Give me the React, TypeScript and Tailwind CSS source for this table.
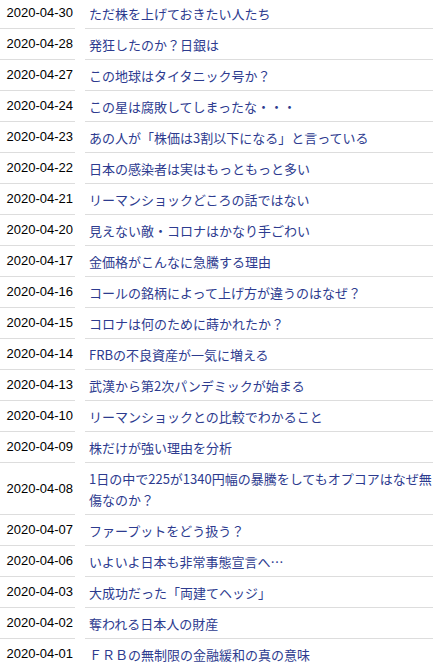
import { Fragment } from "react";

const posts: { date: string; title: string }[] = [
  { date: "2020-04-30", title: "ただ株を上げておきたい人たち" },
  { date: "2020-04-28", title: "発狂したのか？日銀は" },
  { date: "2020-04-27", title: "この地球はタイタニック号か？" },
  { date: "2020-04-24", title: "この星は腐敗してしまったな・・・" },
  { date: "2020-04-23", title: "あの人が「株価は3割以下になる」と言っている" },
  { date: "2020-04-22", title: "日本の感染者は実はもっともっと多い" },
  { date: "2020-04-21", title: "リーマンショックどころの話ではない" },
  { date: "2020-04-20", title: "見えない敵・コロナはかなり手ごわい" },
  { date: "2020-04-17", title: "金価格がこんなに急騰する理由" },
  { date: "2020-04-16", title: "コールの銘柄によって上げ方が違うのはなぜ？" },
  { date: "2020-04-15", title: "コロナは何のために蒔かれたか？" },
  { date: "2020-04-14", title: "FRBの不良資産が一気に増える" },
  { date: "2020-04-13", title: "武漢から第2次パンデミックが始まる" },
  { date: "2020-04-10", title: "リーマンショックとの比較でわかること" },
  { date: "2020-04-09", title: "株だけが強い理由を分析" },
  { date: "2020-04-08", title: "1日の中で225が1340円幅の暴騰をしてもオプコアはなぜ無傷なのか？" },
  { date: "2020-04-07", title: "ファープットをどう扱う？" },
  { date: "2020-04-06", title: "いよいよ日本も非常事態宣言へ…" },
  { date: "2020-04-03", title: "大成功だった「両建てヘッジ」" },
  { date: "2020-04-02", title: "奪われる日本人の財産" },
  { date: "2020-04-01", title: "ＦＲＢの無制限の金融緩和の真の意味" },
];

export default function App() {
  return (
    <div className="bg-white w-[433px] -mt-[2px] overflow-hidden">
      {/* archive list: date | title */}
      <div className="grid grid-cols-[75px_1fr] gap-x-[10px]">
        {posts.map((p) => (
          <Fragment key={p.date}>
            <div className="flex items-center justify-end pr-[2px] border-b border-[#dddddd] text-[13px] text-black font-['Liberation_Sans',Arial,sans-serif]">
              {p.date}
            </div>
            <div className="pl-[4px] pt-[5px] pb-[4px] border-b border-[#dddddd] text-[13px] leading-[21px] text-[#2d3b8f] font-['Noto_Sans_CJK_JP',sans-serif]">
              <a href="#">{p.title}</a>
            </div>
          </Fragment>
        ))}
      </div>
    </div>
  );
}
